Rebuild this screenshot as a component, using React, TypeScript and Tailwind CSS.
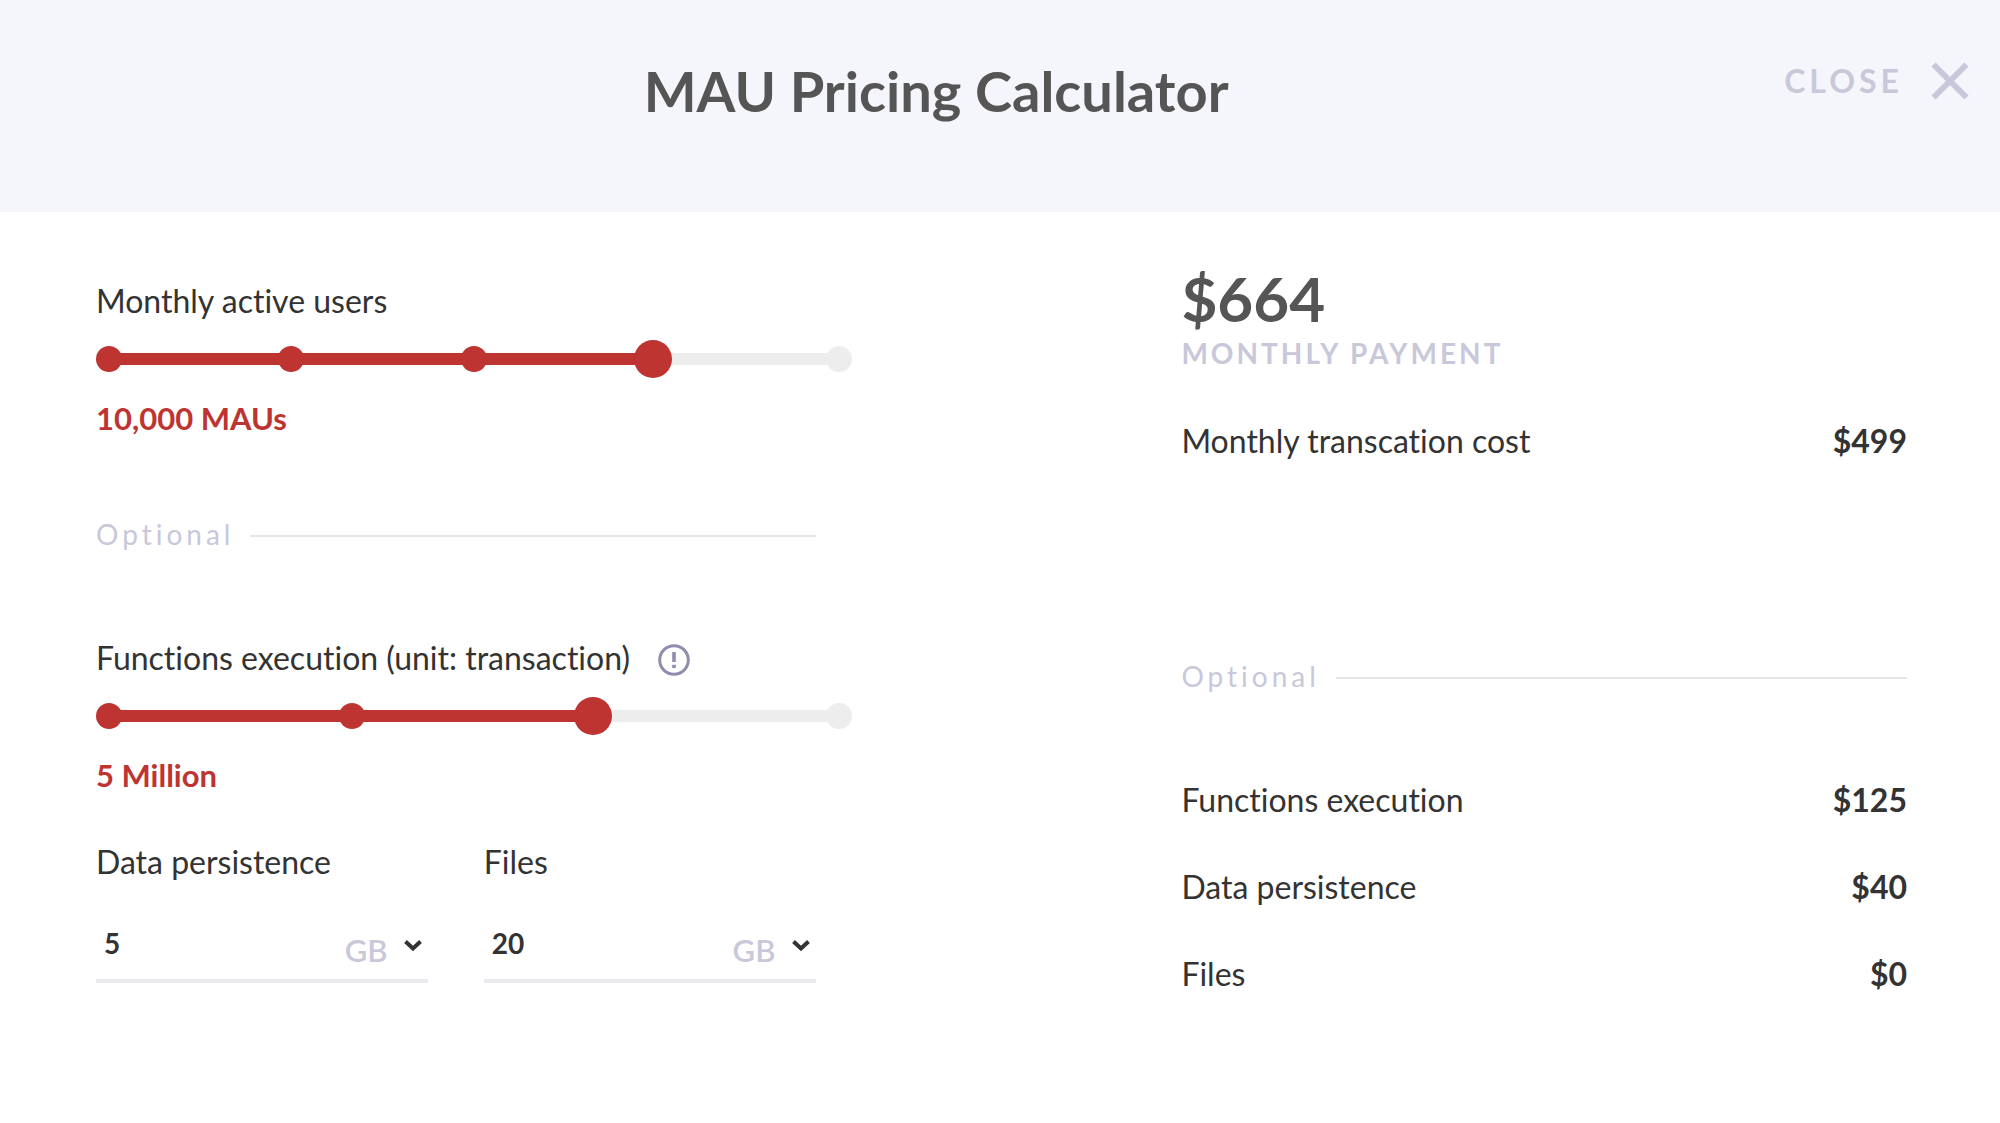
import { useState } from "react";

const MAU_STEPS = [
  { label: "100 MAUs", cost: 0 },
  { label: "1,000 MAUs", cost: 99 },
  { label: "5,000 MAUs", cost: 299 },
  { label: "10,000 MAUs", cost: 499 },
  { label: "25,000 MAUs", cost: 999 },
];

const FUNCTION_STEPS = [
  { label: "0.5 Million", cost: 0 },
  { label: "1 Million", cost: 25 },
  { label: "5 Million", cost: 125 },
  { label: "10 Million", cost: 250 },
];

const DATA_PRICE_PER_GB = 8;
const FREE_FILES_GB = 20;

type StepSliderProps = {
  id: string;
  steps: { label: string; cost: number }[];
  value: number;
  onChange: (value: number) => void;
};

function StepSlider({ id, steps, value, onChange }: StepSliderProps) {
  const max = steps.length - 1;

  return (
    <>
      <div className="mt-[19px] -mr-9 grid h-[38px] items-center">
        <div className="mx-2 h-3 bg-[#ededed] [grid-area:1/1]">
          <div
            className="h-full bg-[#be3431]"
            style={{ width: `${(value / max) * 100}%` }}
          />
        </div>
        <div className="flex justify-between [grid-area:1/1]">
          {steps.map((step, i) => (
            <span
              key={step.label}
              // the thumb covers the dot of the current step
              className={
                i < value
                  ? "size-[26px] rounded-full bg-[#be3431]"
                  : i === value
                    ? "size-[26px]"
                    : "size-[26px] rounded-full bg-[#ededed]"
              }
            />
          ))}
        </div>
        <input
          id={id}
          type="range"
          min={0}
          max={max}
          step={1}
          value={value}
          onChange={(e) => onChange(Number(e.target.value))}
          aria-valuetext={steps[value].label}
          className="z-10 h-[38px] w-full cursor-pointer appearance-none bg-transparent [grid-area:1/1] [&::-webkit-slider-thumb]:size-[38px] [&::-webkit-slider-thumb]:appearance-none [&::-webkit-slider-thumb]:rounded-full [&::-webkit-slider-thumb]:bg-[#be3431]"
        />
      </div>
      <output
        htmlFor={id}
        className="mt-5 block text-[31px] leading-10 font-bold text-[#be3431]"
      >
        {steps[value].label}
      </output>
    </>
  );
}

type StorageFieldProps = {
  id: string;
  label: string;
  value: string;
  onChange: (value: string) => void;
};

function StorageField({ id, label, value, onChange }: StorageFieldProps) {
  return (
    <div className="min-w-0 flex-1">
      <label htmlFor={id} className="block text-[32px] leading-10">
        {label}
      </label>
      <div className="mt-[37px] flex h-16 border-b-4 border-[#ebebef]">
        <input
          id={id}
          type="text"
          inputMode="numeric"
          value={value}
          onChange={(e) => onChange(e.target.value)}
          className="min-w-0 flex-1 pb-3 pl-2 text-[28px] font-bold outline-none"
        />
        <div className="relative">
          <select
            aria-label={`${label} unit`}
            className="h-full w-[83px] cursor-pointer appearance-none bg-transparent pt-0.5 text-[31px] font-semibold text-[#c8c8da] outline-none"
          >
            <option>GB</option>
            <option>TB</option>
          </select>
          <svg
            viewBox="0 0 18 12"
            className="pointer-events-none absolute top-5 right-1.5 h-3 w-[18px]"
            fill="none"
            stroke="currentColor"
            strokeWidth="4"
            aria-hidden="true"
          >
            <path d="M1.5 2.5l7.5 7 7.5-7" />
          </svg>
        </div>
      </div>
    </div>
  );
}

function OptionalDivider() {
  return (
    <div className="flex items-center gap-4">
      <span className="text-[28px] leading-8 tracking-[4px] text-[#c8c8da]">
        Optional
      </span>
      <hr className="mt-1 flex-1 border-0 border-t-2 border-[#e6e6ea]" />
    </div>
  );
}

function CostRow({ label, cost }: { label: string; cost: number }) {
  return (
    <div className="flex justify-between text-[32px] leading-10">
      <dt>{label}</dt>
      <dd className="font-bold">${cost}</dd>
    </div>
  );
}

export default function App() {
  const [mau, setMau] = useState(3);
  const [functions, setFunctions] = useState(2);
  const [data, setData] = useState("5");
  const [files, setFiles] = useState("20");

  const mauCost = MAU_STEPS[mau].cost;
  const functionsCost = FUNCTION_STEPS[functions].cost;
  const dataCost = (Number(data) || 0) * DATA_PRICE_PER_GB;
  const filesCost = Math.max(0, (Number(files) || 0) - FREE_FILES_GB);
  const total = mauCost + functionsCost + dataCost + filesCost;

  return (
    <div className="min-h-screen bg-white font-['Lato',sans-serif] text-[#333] [font-variant-ligatures:none]">
      <header className="flex items-start bg-[#f5f6fb] pt-[59px] pr-[31px] pb-[89px] pl-[88px]">
        <h1 className="flex-1 text-center text-[56px] leading-[64px] font-bold text-[#555]">
          MAU Pricing Calculator
        </h1>
        <button
          type="button"
          className="mt-0.5 flex cursor-pointer items-center gap-7 text-[32px] leading-10 font-bold tracking-[4px] text-[#c8c8da]"
        >
          CLOSE
          <svg
            viewBox="0 0 38 38"
            className="size-[38px]"
            fill="none"
            stroke="currentColor"
            strokeWidth="6"
            aria-hidden="true"
          >
            <path d="M2.5 2.5l33 33M35.5 2.5l-33 33" />
          </svg>
        </button>
      </header>

      <main className="grid grid-cols-[719fr_725fr] gap-x-[20.2%] pr-[93px] pl-24">
        <section className="min-w-0 pt-[69px] pb-16">
          <label htmlFor="mau" className="block text-[32px] leading-10">
            Monthly active users
          </label>
          <StepSlider id="mau" steps={MAU_STEPS} value={mau} onChange={setMau} />

          <div className="mt-20 mb-[88px]">
            <OptionalDivider />
          </div>

          <div className="flex items-center gap-7">
            <label htmlFor="functions" className="text-[32px] leading-10">
              Functions execution (unit: transaction)
            </label>
            <button
              type="button"
              aria-label="About functions execution"
              className="mt-1 text-[#8e8eac]"
            >
              <svg
                viewBox="0 0 32 32"
                className="size-8"
                fill="none"
                stroke="currentColor"
                strokeWidth="3"
                aria-hidden="true"
              >
                <circle cx="16" cy="16" r="14.3" />
                <path d="M16 8v10M16 20.8v3.2" strokeWidth="3.6" />
              </svg>
            </button>
          </div>
          <StepSlider
            id="functions"
            steps={FUNCTION_STEPS}
            value={functions}
            onChange={setFunctions}
          />

          <div className="mt-[47px] flex gap-14">
            <StorageField
              id="data"
              label="Data persistence"
              value={data}
              onChange={setData}
            />
            <StorageField
              id="files"
              label="Files"
              value={files}
              onChange={setFiles}
            />
          </div>
        </section>

        <section className="min-w-0 pt-14 pb-16">
          <p className="text-[62px] leading-[60px] font-bold text-[#555]">
            ${total}
          </p>
          <p className="mt-[9px] text-[28px] leading-8 font-bold tracking-[3px] text-[#c8c8da]">
            MONTHLY PAYMENT
          </p>
          <dl className="mt-[52px]">
            <CostRow label="Monthly transcation cost" cost={mauCost} />
          </dl>

          <div className="mt-[199px] mb-[88px]">
            <OptionalDivider />
          </div>

          <dl className="flex flex-col gap-[47px]">
            <CostRow label="Functions execution" cost={functionsCost} />
            <CostRow label="Data persistence" cost={dataCost} />
            <CostRow label="Files" cost={filesCost} />
          </dl>
        </section>
      </main>
    </div>
  );
}
